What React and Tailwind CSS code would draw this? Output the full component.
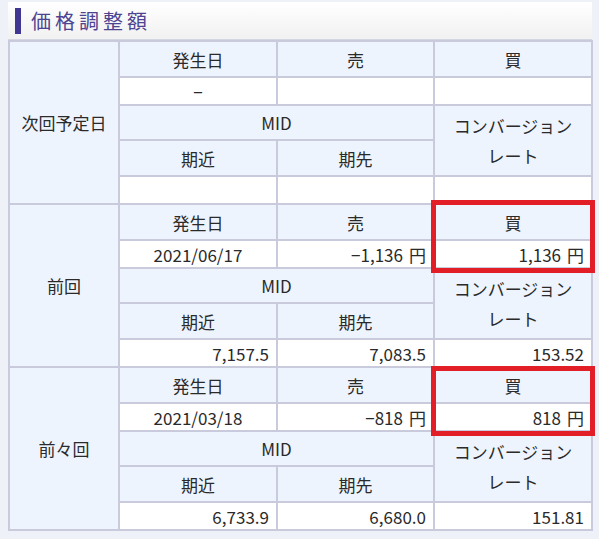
import React from "react";

const border = "border-2 border-[#c9cbdd]";
const th = `${border} bg-[#eef4fd] text-center font-normal`;
const td = `${border} bg-white text-right pr-[7px]`;

function Yen({ v }) {
  return (
    <>
      {v}
      <span className="ml-[6px]">円</span>
    </>
  );
}

function Section({ label, date, sell, buy, near, far, rate }) {
  return (
    <>
      <tr className="h-[36px]">
        <th rowSpan={5} className={th}>{label}</th>
        <th className={th}>発生日</th>
        <th className={th}>売</th>
        <th className={th}>買</th>
      </tr>
      <tr className="h-[28px]">
        <td className={`${border} bg-white text-center`}>{date}</td>
        <td className={td}>{sell && <Yen v={sell} />}</td>
        <td className={td}>{buy && <Yen v={buy} />}</td>
      </tr>
      <tr className="h-[35px]">
        <th colSpan={2} className={th}>MID</th>
        <th rowSpan={2} className={`${th} leading-[30px]`}>
          コンバージョン
          <br />
          レート
        </th>
      </tr>
      <tr className="h-[36px]">
        <th className={th}>期近</th>
        <th className={th}>期先</th>
      </tr>
      <tr className="h-[28px]">
        <td className={td}>{near}</td>
        <td className={td}>{far}</td>
        <td className={td}>{rate}</td>
      </tr>
    </>
  );
}

export default function App() {
  return (
    <div
      className="relative w-[599px] h-[539px] bg-[#eef2f8] pl-[8px] pt-[2px] text-[#2a2a2a] text-[17px]"
      style={{ fontFamily: '"Noto Sans CJK JP", "Noto Sans", sans-serif' }}
    >
      <div className="w-[584px] h-[38px] flex items-center bg-gradient-to-b from-white to-[#f1f1f1] border-b border-[#d4d6e2]">
        <div className="ml-[7px] w-[6px] h-[26px] bg-[#3f3791]" />
        <div className="ml-[10px] text-[20px] tracking-[4px] font-normal text-[#4d4391]">価格調整額</div>
      </div>
      <table className="table-fixed border-collapse w-[583px] leading-none">
        <colgroup>
          <col className="w-[110px]" />
          <col className="w-[158px]" />
          <col className="w-[157px]" />
          <col className="w-[158px]" />
        </colgroup>
        <tbody>
          <Section label="次回予定日" date="−" sell="" buy="" near="" far="" rate="" />
          <Section label="前回" date="2021/06/17" sell="−1,136" buy="1,136" near="7,157.5" far="7,083.5" rate="153.52" />
          <Section label="前々回" date="2021/03/18" sell="−818" buy="818" near="6,733.9" far="6,680.0" rate="151.81" />
        </tbody>
      </table>
      <div className="absolute left-[431px] top-[200px] w-[164px] h-[73px] border-[5px] border-[#e21f26]" />
      <div className="absolute left-[431px] top-[366px] w-[164px] h-[70px] border-[5px] border-[#e21f26]" />
    </div>
  );
}
